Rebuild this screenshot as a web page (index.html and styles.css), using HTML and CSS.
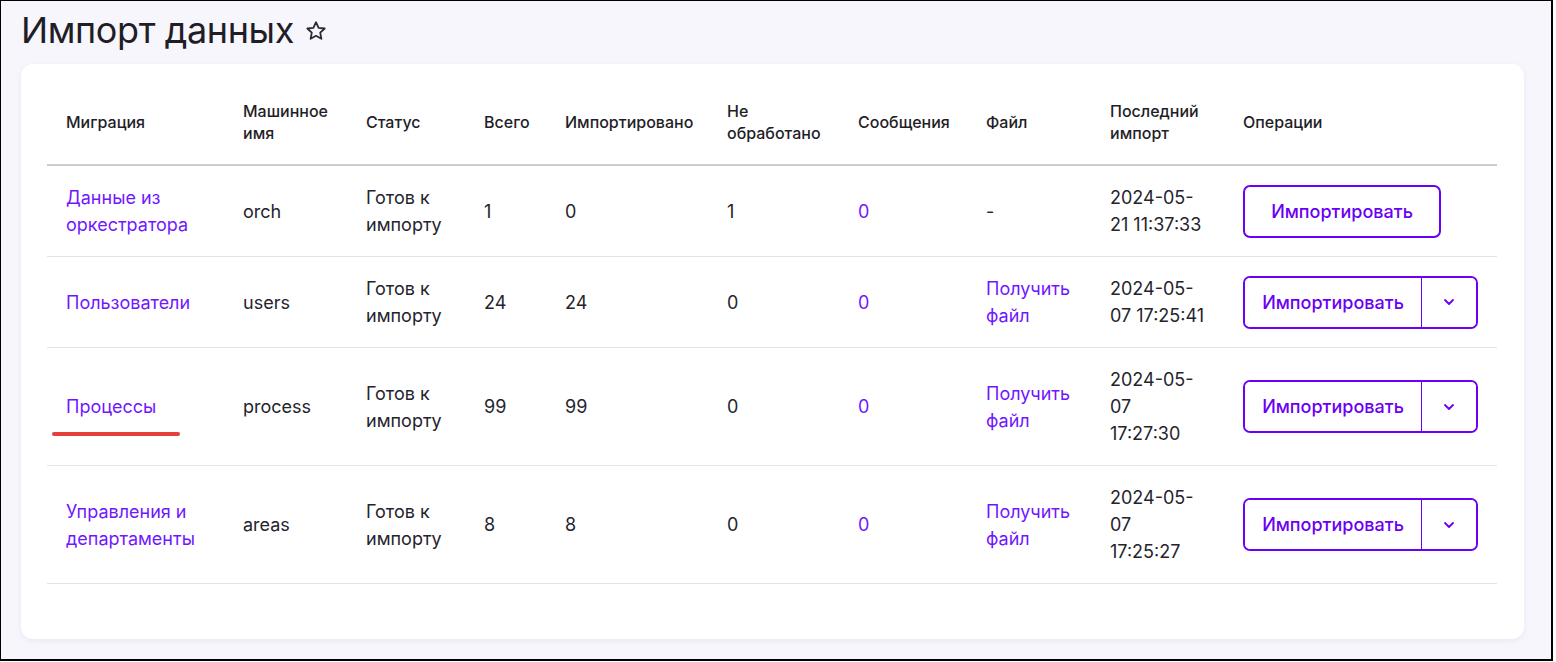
FILE: index.html
```html
<!DOCTYPE html>
<html lang="ru">
<head>
<meta charset="utf-8">
<title>Импорт данных</title>
<link rel="stylesheet" href="styles.css">
</head>
<body>
<div class="frame">
  <header class="page-head">
    <h1 class="title">Импорт данных</h1>
    <svg class="star" width="24" height="24" viewBox="0 0 24 24" aria-hidden="true">
      <path d="M12 3.2l2.6 5.6 6.1.7-4.5 4.2 1.2 6.1L12 16.8l-5.4 3 1.2-6.1-4.5-4.2 6.1-.7z" fill="none" stroke="#2b2a33" stroke-width="1.8" stroke-linejoin="round"/>
    </svg>
  </header>

  <section class="card">
    <table class="grid">
      <colgroup>
        <col style="width:177px"><col style="width:123px"><col style="width:118px"><col style="width:81px"><col style="width:162px"><col style="width:131px"><col style="width:128px"><col style="width:124px"><col style="width:133px"><col style="width:273px">
      </colgroup>
      <thead>
        <tr>
          <th>Миграция</th>
          <th>Машинное<br>имя</th>
          <th>Статус</th>
          <th>Всего</th>
          <th>Импортировано</th>
          <th>Не<br>обработано</th>
          <th>Сообщения</th>
          <th>Файл</th>
          <th>Последний<br>импорт</th>
          <th>Операции</th>
        </tr>
      </thead>
      <tbody>
        <tr>
          <td><a class="link" href="#">Данные из<br>оркестратора</a></td>
          <td>orch</td>
          <td>Готов к<br>импорту</td>
          <td>1</td>
          <td>0</td>
          <td>1</td>
          <td><a class="link" href="#">0</a></td>
          <td>-</td>
          <td>2024-05-<br>21 11:37:33</td>
          <td><button class="btn btn-single">Импортировать</button></td>
        </tr>
        <tr>
          <td><a class="link" href="#">Пользователи</a></td>
          <td>users</td>
          <td>Готов к<br>импорту</td>
          <td>24</td>
          <td>24</td>
          <td>0</td>
          <td><a class="link" href="#">0</a></td>
          <td><a class="link" href="#">Получить<br>файл</a></td>
          <td>2024-05-<br>07 17:25:41</td>
          <td>
            <div class="split">
              <button class="split-main">Импортировать</button>
              <button class="split-toggle" aria-label="Ещё"><svg width="12" height="8" viewBox="0 0 12 8"><path d="M2 2l4 4 4-4" fill="none" stroke="#6a00f4" stroke-width="1.8" stroke-linecap="round" stroke-linejoin="round"/></svg></button>
            </div>
          </td>
        </tr>
        <tr>
          <td class="marked"><a class="link" href="#">Процессы</a><span class="underline-mark"></span></td>
          <td>process</td>
          <td>Готов к<br>импорту</td>
          <td>99</td>
          <td>99</td>
          <td>0</td>
          <td><a class="link" href="#">0</a></td>
          <td><a class="link" href="#">Получить<br>файл</a></td>
          <td>2024-05-<br>07<br>17:27:30</td>
          <td>
            <div class="split">
              <button class="split-main">Импортировать</button>
              <button class="split-toggle" aria-label="Ещё"><svg width="12" height="8" viewBox="0 0 12 8"><path d="M2 2l4 4 4-4" fill="none" stroke="#6a00f4" stroke-width="1.8" stroke-linecap="round" stroke-linejoin="round"/></svg></button>
            </div>
          </td>
        </tr>
        <tr>
          <td><a class="link" href="#">Управления и<br>департаменты</a></td>
          <td>areas</td>
          <td>Готов к<br>импорту</td>
          <td>8</td>
          <td>8</td>
          <td>0</td>
          <td><a class="link" href="#">0</a></td>
          <td><a class="link" href="#">Получить<br>файл</a></td>
          <td>2024-05-<br>07<br>17:25:27</td>
          <td>
            <div class="split">
              <button class="split-main">Импортировать</button>
              <button class="split-toggle" aria-label="Ещё"><svg width="12" height="8" viewBox="0 0 12 8"><path d="M2 2l4 4 4-4" fill="none" stroke="#6a00f4" stroke-width="1.8" stroke-linecap="round" stroke-linejoin="round"/></svg></button>
            </div>
          </td>
        </tr>
      </tbody>
    </table>
  </section>
</div>
</body>
</html>
```

FILE: styles.css
```css
* { box-sizing: border-box; }

html, body {
  margin: 0;
  padding: 0;
  background: #ffffff;
}

body {
  font-family: Inter, "Noto Sans", "Liberation Sans", sans-serif;
  color: #23222b;
}

.frame {
  width: 1553px;
  height: 661px;
  border-style: solid;
  border-color: #000;
  border-width: 1px 2px 2px 1px;
  background: #f8f6fd;
  padding: 5px 0 0 20px;
  overflow: hidden;
}

.page-head {
  display: flex;
  align-items: center;
  gap: 10px;
  height: 48px;
  margin-bottom: 10px;
}

.title {
  margin: 0;
  font-size: 36px;
  font-weight: 400;
  line-height: 48px;
  letter-spacing: -0.4px;
  color: #1f1e27;
}

.star { margin-top: 2px; }

.card {
  width: 1503px;
  background: #fff;
  border-radius: 12px;
  box-shadow: 0 2px 6px rgba(70, 50, 140, 0.08);
  padding: 16px 27px 55px 26px;
}

.grid {
  width: 1450px;
  table-layout: fixed;
  border-collapse: collapse;
}

.grid th {
  text-align: left;
  font-size: 16px;
  font-weight: 500;
  line-height: 22px;
  padding: 20px 6px 20px 19px;
  border-bottom: 2px solid #cdcdcd;
  color: #1f1e27;
  vertical-align: middle;
}

.grid td {
  font-size: 18px;
  line-height: 27px;
  padding: 18px 6px 18px 19px;
  border-bottom: 1px solid #e4e4e4;
  vertical-align: middle;
  color: #25242d;
}

.link {
  color: #7117ff;
  text-decoration: none;
}

.marked { position: relative; }

.underline-mark {
  position: absolute;
  left: 5px;
  top: 84px;
  width: 128px;
  height: 4px;
  border-radius: 2px;
  background: #e5403a;
}

.btn,
.split-main,
.split-toggle {
  font-family: inherit;
  font-size: 18px;
  font-weight: 500;
  color: #6a00f4;
  background: #fff;
  cursor: pointer;
}

.btn-single {
  width: 198px;
  height: 53px;
  border: 2px solid #6a00f4;
  border-radius: 7px;
}

.split {
  display: flex;
  width: 235px;
  height: 53px;
  border: 2px solid #6a00f4;
  border-radius: 7px;
  overflow: hidden;
}

.split-main {
  width: 177px;
  border: 0;
  border-right: 1px solid #6a00f4;
  padding: 0;
}

.split-toggle {
  flex: 1;
  border: 0;
  padding: 0;
  display: flex;
  align-items: center;
  justify-content: center;
}
```
